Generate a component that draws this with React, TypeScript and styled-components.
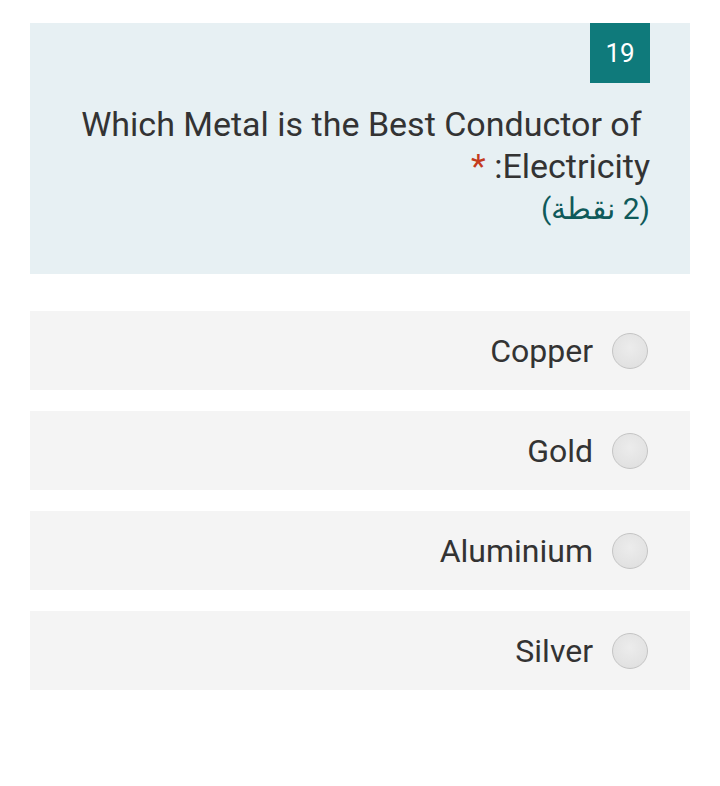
import React from "react";
import styled, { createGlobalStyle } from "styled-components";

const GlobalStyle = createGlobalStyle`
  html, body {
    margin: 0;
    padding: 0;
    background: #ffffff;
    font-family: Roboto, "Noto Sans", Arial, sans-serif;
  }
`;

const Page = styled.div`
  width: 720px;
  min-height: 786px;
  padding: 23px 30px;
  box-sizing: border-box;
  direction: rtl;
`;

const Question = styled.div`
  background: #e7f0f3;
  height: 251px;
  box-sizing: border-box;
  padding: 0 40px;
  display: flex;
  flex-direction: column;
`;

const Badge = styled.div`
  align-self: flex-start;
  width: 60px;
  height: 60px;
  background: #0f7a7b;
  color: #ffffff;
  font-size: 26px;
  display: flex;
  align-items: center;
  justify-content: center;
  direction: ltr;
`;

const Title = styled.div`
  margin-top: 20px;
  font-size: 34px;
  line-height: 42px;
  color: #333333;
  text-align: right;
`;

const Required = styled.span`
  color: #c43b1d;
`;

const Points = styled.div`
  font-size: 30px;
  line-height: 44px;
  color: #0f5a5a;
  text-align: right;
`;

const Options = styled.div`
  margin-top: 37px;
  display: flex;
  flex-direction: column;
  gap: 21px;
`;

const Option = styled.label`
  height: 79px;
  background: #f4f4f4;
  display: flex;
  align-items: center;
  padding-right: 42px;
  gap: 19px;
  cursor: pointer;
`;

const Radio = styled.span`
  width: 36px;
  height: 36px;
  border-radius: 50%;
  box-sizing: border-box;
  border: 1.5px solid #c4c4c4;
  background: radial-gradient(circle at 50% 40%, #ececec 0%, #e2e2e2 70%, #d8d8d8 100%);
  flex-shrink: 0;
`;

const OptionText = styled.span`
  font-size: 32px;
  color: #333333;
`;

const options = ["Copper", "Gold", "Aluminium", "Silver"];

const App: React.FC = () => {
  return (
    <Page>
      <GlobalStyle />
      <Question>
        <Badge>19</Badge>
        <Title>
          {"Which Metal is the Best Conductor of\u00a0 Electricity: "}
          <Required>*</Required>
        </Title>
        <Points>(2 نقطة)</Points>
      </Question>

      <Options>
        {options.map((o) => (
          <Option key={o}>
            <Radio />
            <OptionText>{o}</OptionText>
          </Option>
        ))}
      </Options>
    </Page>
  );
};

export default App;
